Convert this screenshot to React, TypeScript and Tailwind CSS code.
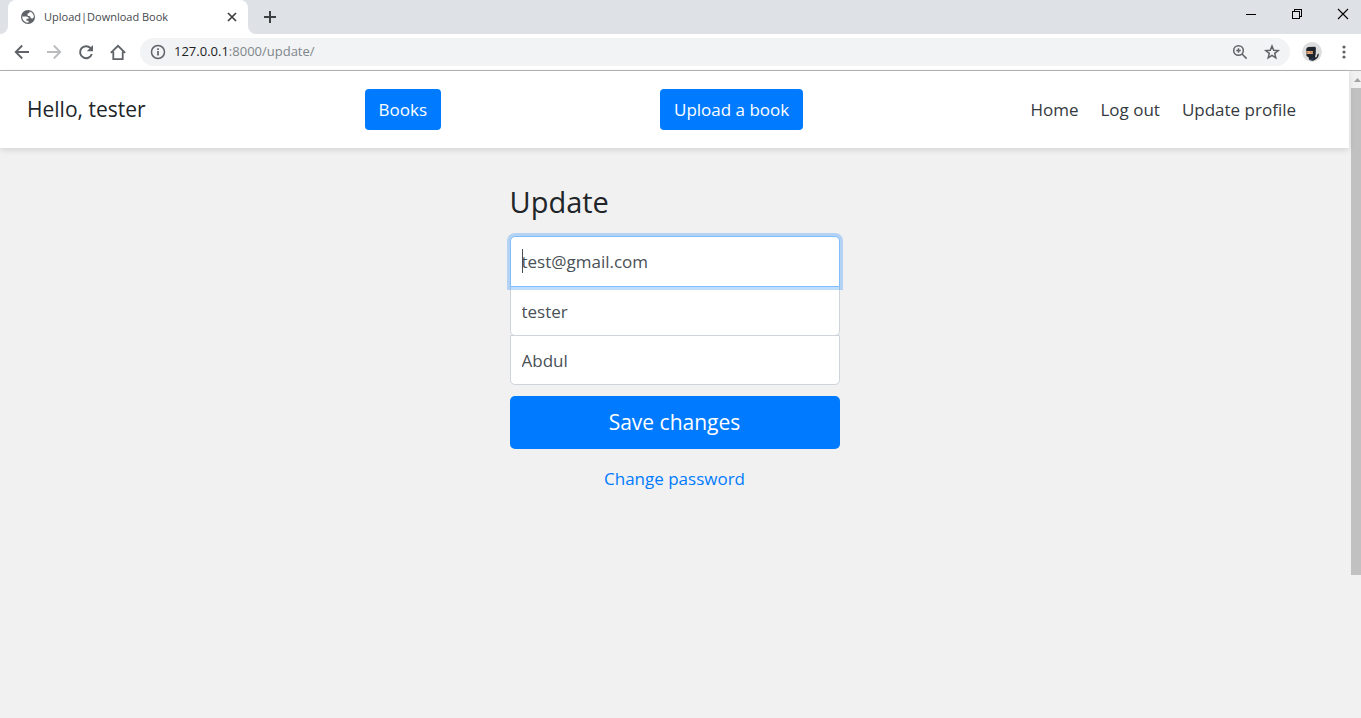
import type { ReactNode } from "react";

function IconButton({ label, children, className = "" }: { label: string; children: ReactNode; className?: string }) {
  return (
    <button type="button" aria-label={label} className={`flex shrink-0 items-center justify-center ${className}`}>
      {children}
    </button>
  );
}

function TabStrip() {
  return (
    <div className="flex h-[34px] items-stretch bg-[#dee1e6]">
      <svg className="h-2 w-2 shrink-0 self-end" viewBox="0 0 8 8" aria-hidden="true">
        <path d="M8 0v8H0a8 8 0 0 0 8-8z" fill="#fff" />
      </svg>
      <div className="flex w-60 items-center rounded-t-lg bg-white pr-2 pl-3">
        <svg className="h-4 w-4 shrink-0" viewBox="0 0 16 16" aria-hidden="true">
          <circle cx="8" cy="8" r="7" fill="#5f6368" />
          <path d="M2.2 7.4h4c1.400 0 2.600.9 2.600 2.300H6.500v2h2v2.100A6 6 0 0 1 2.200 7.400z" fill="#fff" />
          <path d="M9.600 2.400c.2 1.300-.6 1.900-2 2C7.300 6 7.600 6.900 9 7.100c1.300.2 1.600 1.300 1.700 2.200l2.200.2 1-1.700a6 6 0 0 0-4.300-5.400z" fill="#fff" />
        </svg>
        <span className="ml-2 grow text-[11px] text-[#45494d]">Upload|Download Book</span>
        <IconButton label="Close tab" className="h-4 w-4">
          <svg className="h-4 w-4" viewBox="0 0 16 16" stroke="#3c4043" strokeWidth="1.7">
            <path d="M4 4l8 8M12 4l-8 8" />
          </svg>
        </IconButton>
      </div>
      <svg className="h-2 w-2 shrink-0 self-end" viewBox="0 0 8 8" aria-hidden="true">
        <path d="M0 0v8h8a8 8 0 0 1-8-8z" fill="#fff" />
      </svg>
      <IconButton label="New tab" className="w-7">
        <svg className="h-4 w-4" viewBox="0 0 16 16" stroke="#3c4043" strokeWidth="2">
          <path d="M8 2v12M2 8h12" />
        </svg>
      </IconButton>
      <div className="ml-auto flex h-7 items-center gap-[30px] pr-[10px]">
        <IconButton label="Minimize" className="h-4 w-4">
          <svg className="h-4 w-4" viewBox="0 0 16 16" stroke="#000" shapeRendering="crispEdges">
            <path d="M3 8.500h10" />
          </svg>
        </IconButton>
        <IconButton label="Restore" className="h-4 w-4">
          <svg className="h-4 w-4" viewBox="0 0 16 16" fill="none" stroke="#000" shapeRendering="crispEdges">
            <path d="M3.500 5.500h7v7h-7zM5.500 5.500v-2h7v7h-2" />
          </svg>
        </IconButton>
        <IconButton label="Close" className="h-4 w-4">
          <svg className="h-4 w-4" viewBox="0 0 16 16" stroke="#000" strokeWidth="1.1">
            <path d="M3 3l10 10M13 3L3 13" />
          </svg>
        </IconButton>
      </div>
    </div>
  );
}

function Toolbar() {
  return (
    <div className="flex h-[37px] items-center border-b border-[#b3b3b3] bg-white pr-[7px] pl-3">
      <div className="flex gap-3">
        <IconButton label="Back" className="h-5 w-5">
          <svg className="h-5 w-5" viewBox="0 0 20 20" fill="none" stroke="#5f6368" strokeWidth="1.8">
            <path d="M17 10H4M10.200 3.500L3.700 10l6.500 6.500" />
          </svg>
        </IconButton>
        <IconButton label="Forward" className="h-5 w-5">
          <svg className="h-5 w-5" viewBox="0 0 20 20" fill="none" stroke="#babcbe" strokeWidth="1.8">
            <path d="M3 10h13M9.800 3.500l6.500 6.500-6.500 6.500" />
          </svg>
        </IconButton>
        <IconButton label="Reload" className="h-5 w-5">
          <svg className="h-5 w-5" viewBox="0 0 20 20" fill="none" stroke="#5f6368" strokeWidth="2">
            <path d="M15.800 12A6 6 0 1 1 14.600 6.200" />
            <path d="M17 3v6.200h-6.200z" fill="#5f6368" stroke="none" />
          </svg>
        </IconButton>
        <IconButton label="Home" className="h-5 w-5">
          <svg className="h-5 w-5" viewBox="0 0 20 20" fill="none" stroke="#5f6368" strokeWidth="1.8">
            <path d="M2.800 10.800L10 3.800l7.200 7M5.300 9.500v7.600h9.400V9.500" />
          </svg>
        </IconButton>
      </div>
      <div className="ml-3 flex h-7 grow items-center rounded-full bg-[#f1f3f4] px-2">
        <IconButton label="Site information" className="h-5 w-5">
          <svg className="h-5 w-5" viewBox="0 0 20 20" fill="none" stroke="#5f6368" strokeWidth="1.5">
            <circle cx="10" cy="10" r="6.500" />
            <path d="M10 9v4.500M10 6.300v1.700" strokeWidth="1.7" />
          </svg>
        </IconButton>
        <div className="ml-[6px] grow text-[13px] text-[#202124]">
          127.0.0.1<span className="text-[#80868b]">:8000/update/</span>
        </div>
        <div className="flex gap-3">
          <IconButton label="Zoom" className="h-5 w-5">
            <svg className="h-5 w-5" viewBox="0 0 20 20" fill="none" stroke="#5f6368" strokeWidth="1.5">
              <circle cx="8.500" cy="8.500" r="4.800" />
              <path d="M12 12l4.600 4.600M8.500 6.200v4.600M6.200 8.500h4.600" />
            </svg>
          </IconButton>
          <IconButton label="Bookmark this page" className="h-5 w-5">
            <svg className="h-5 w-5" viewBox="0 0 20 20" fill="none" stroke="#5f6368" strokeWidth="1.5">
              <path d="M10 4l1.700 4.200 4.500.3-3.500 2.900 1.100 4.400L10 13.400l-3.800 2.400 1.100-4.400-3.500-2.900 4.500-.3z" />
            </svg>
          </IconButton>
        </div>
      </div>
      <IconButton label="Profile" className="ml-3 h-5 w-5">
        <svg className="h-5 w-5" viewBox="0 0 20 20">
          <circle cx="10" cy="10" r="10" fill="#dedede" />
          <path d="M4.200 8c0-1.800 1-2.700 2.300-3L13 4.800l.9 1-.2 6.200-.7 3.200h1.500l1-3 1.300-.6c.2 3-1.200 5.200-3.400 5.800-1.900 1.800-4.800 1.600-6.400.2L6.800 15.500 4.500 14z" fill="#1e242b" />
          <path d="M4.300 9h6.500v2.900H4.600z" fill="#e3a878" />
          <path d="M5.300 10.300h1M8.300 10.300h1.200" stroke="#6a432d" strokeWidth=".8" />
          <path d="M8.500 17.500l3-1" stroke="#1d4e86" />
        </svg>
      </IconButton>
      <IconButton label="Menu" className="ml-3 h-5 w-5">
        <svg className="h-5 w-5" viewBox="0 0 20 20" fill="#5f6368">
          <circle cx="10" cy="5" r="1.600" />
          <circle cx="10" cy="10" r="1.600" />
          <circle cx="10" cy="15" r="1.600" />
        </svg>
      </IconButton>
    </div>
  );
}

function SiteNav() {
  return (
    <header className="relative flex h-[77px] shrink-0 items-center justify-between bg-white pr-[53px] pl-[27px] shadow-[0_2px_6px_rgba(0,0,0,0.12)]">
      <h5 className="text-[21px] text-[#212529]">Hello, tester</h5>
      <a href="#books" className="flex h-[41px] w-[76px] items-center justify-center rounded bg-[#007bff] text-[17px] text-white">
        Books
      </a>
      <a href="#upload" className="flex h-[41px] w-[143px] items-center justify-center rounded bg-[#007bff] text-[17px] text-white">
        Upload a book
      </a>
      <nav className="flex gap-[22px] pl-2 text-[17px] text-[#343a40]">
        <a href="#home">Home</a>
        <a href="#logout">Log out</a>
        <a href="#profile">Update profile</a>
      </nav>
    </header>
  );
}

function UpdateForm() {
  return (
    <form className="mx-auto mt-8 flex w-[330px] flex-col text-[17px]" onSubmit={(e) => e.preventDefault()}>
      <h1 className="mb-[13px] text-[29px] leading-[43px] text-[#212529]">Update</h1>
      <div className="relative z-10">
        <input
          type="email"
          aria-label="Email"
          defaultValue="test@gmail.com"
          className="block h-[51px] w-full rounded-t-[5px] border border-[#80bdff] bg-white px-[11px] text-[#495057] shadow-[0_0_0_3px_rgba(0,123,255,0.25)] outline-none"
        />
        <span className="absolute top-[13px] left-3 h-6 w-px bg-[#495057]" />
      </div>
      <input
        type="text"
        aria-label="Username"
        defaultValue="tester"
        className="-mt-px h-[50px] rounded-b-[5px] border border-[#ced4da] bg-white px-[11px] text-[#495057] outline-none"
      />
      <input
        type="text"
        aria-label="First name"
        defaultValue="Abdul"
        className="-mt-px h-[50px] rounded-b-[5px] border border-[#ced4da] bg-white px-[11px] text-[#495057] outline-none"
      />
      <button type="submit" className="mt-[11px] h-[53px] rounded-[5px] bg-[#007bff] text-[21px] text-white">
        Save changes
      </button>
      <a href="#password" className="mt-[18px] self-center leading-6 text-[#007bff]">
        Change password
      </a>
    </form>
  );
}

function ScrollTrack() {
  return (
    <div className="flex w-3 shrink-0 flex-col bg-[#f1f1f1] pl-[2px]" aria-hidden="true">
      <svg className="h-[17px] w-[10px] shrink-0" viewBox="0 0 10 17">
        <path d="M3 11l3.500-4L10 11z" fill="#a3a3a3" />
      </svg>
      <div className="h-[487px] bg-[#c1c1c1]" />
    </div>
  );
}

export default function App() {
  return (
    <div className="flex min-h-screen flex-col bg-[#f1f1f1] font-['Open_Sans','Noto_Sans',sans-serif]">
      <TabStrip />
      <Toolbar />
      <div className="flex grow">
        <main className="flex grow flex-col">
          <SiteNav />
          <UpdateForm />
        </main>
        <ScrollTrack />
      </div>
    </div>
  );
}
